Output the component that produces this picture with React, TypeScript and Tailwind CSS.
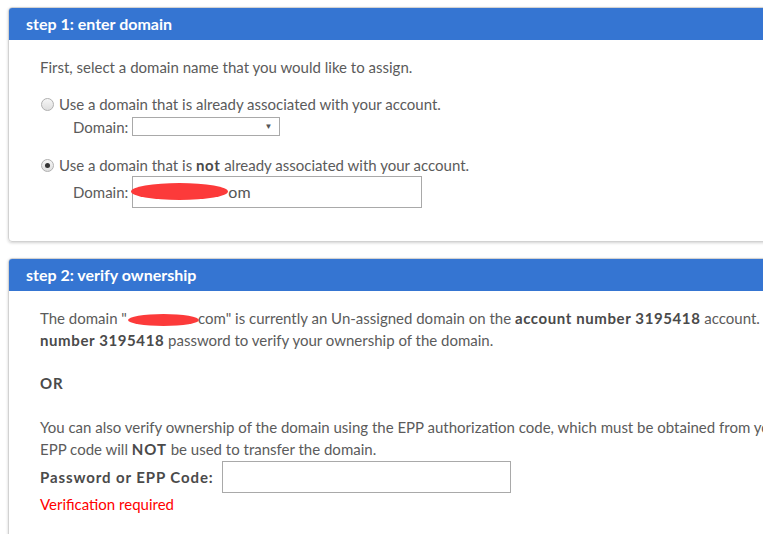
import React from "react";

const font = { fontFamily: "Lato, 'Open Sans', sans-serif" };

function Radio({ checked }: { checked?: boolean }) {
  return (
    <span className="inline-flex items-center justify-center w-[13px] h-[13px] rounded-full border border-[#b0b0b0] bg-gradient-to-b from-[#f6f6f6] to-[#dedede] mr-[5px] shrink-0">
      {checked && <span className="w-[5px] h-[5px] rounded-full bg-[#333]" />}
    </span>
  );
}

function B({ children, wide }: { children: React.ReactNode; wide?: boolean }) {
  return <b className={wide ? "text-[#4a4a4a] tracking-[0.9px]" : "text-[#4a4a4a] tracking-[0.6px]"}>{children}</b>;
}

export default function App() {
  return (
    <div
      className="w-[763px] h-[534px] overflow-hidden bg-white pl-[8px] pt-[7px] text-[15px] text-[#5b5b5b] leading-[22px]"
      style={font}
    >
      <div className="w-[900px] border border-[#d2d2d2] rounded-[4px] shadow-[0_1px_3px_rgba(0,0,0,0.18)] overflow-hidden">
        <div className="h-[32px] bg-[#3575d2] text-white font-bold text-[16px] pl-[17px] flex items-center">
          step 1: enter domain
        </div>
        <div className="pl-[31px] pt-[16px] pb-[33px]">
          <div className="whitespace-nowrap">First, select a domain name that you would like to assign.</div>
          <div className="mt-[15px] flex items-center h-[22px] pl-[1px] whitespace-nowrap">
            <Radio />
            <span>Use a domain that is already associated with your account.</span>
          </div>
          <div className="flex items-center h-[23px] pl-[33px]">
            <span className="mr-[4px]">Domain:</span>
            <div className="relative w-[148px] h-[19px] border border-[#a9a9a9] bg-white">
              <span className="absolute right-[7px] top-[3px] text-[8px] leading-[10px] text-[#555]">▼</span>
            </div>
          </div>
          <div className="mt-[16px] flex items-center h-[22px] pl-[1px] whitespace-nowrap">
            <Radio checked />
            <span>
              Use a domain that is <B>not</B> already associated with your account.
            </span>
          </div>
          <div className="flex items-center h-[32px] pl-[33px]">
            <span className="mr-[4px]">Domain:</span>
            <div className="relative w-[290px] h-[32px] border border-[#a9a9a9] bg-white flex items-center pl-[95px] text-[16px] text-[#555]">
              <span>om</span>
              <span className="absolute left-[-2px] top-[6px] w-[97px] h-[17px] rounded-[50%] bg-[#fc3a3a]" />
            </div>
          </div>
        </div>
      </div>

      <div className="mt-[16px] w-[900px] h-[300px] border border-[#d2d2d2] rounded-[4px] shadow-[0_1px_3px_rgba(0,0,0,0.18)] overflow-hidden">
        <div className="h-[32px] bg-[#3575d2] text-white font-bold text-[16px] pl-[17px] flex items-center">
          step 2: verify ownership
        </div>
        <div className="pl-[31px] pt-[16px]">
          <div className="whitespace-nowrap">
            The domain "
            <span className="inline-block align-middle w-[71px] h-[12px] rounded-[50%] bg-[#fc3a3a] ml-[1px] mr-[-1px]" />
            com" is currently an Un-assigned domain on the <B>account number 3195418</B> account. Please enter the account
          </div>
          <div className="whitespace-nowrap">
            <B>number 3195418</B> password to verify your ownership of the domain.
          </div>
          <div className="mt-[21px]">
            <B wide>OR</B>
          </div>
          <div className="mt-[22px] whitespace-nowrap">
            You can also verify ownership of the domain using the EPP authorization code, which must be obtained from your registrar. The
          </div>
          <div className="whitespace-nowrap">
            EPP code will <B wide>NOT</B> be used to transfer the domain.
          </div>
          <div className="flex items-center h-[33px]">
            <span className="mr-[8px]">
              <B wide>Password or EPP Code:</B>
            </span>
            <div className="w-[289px] h-[32px] border border-[#a9a9a9] bg-white" />
          </div>
          <div className="text-[#f00]">Verification required</div>
        </div>
      </div>
    </div>
  );
}
